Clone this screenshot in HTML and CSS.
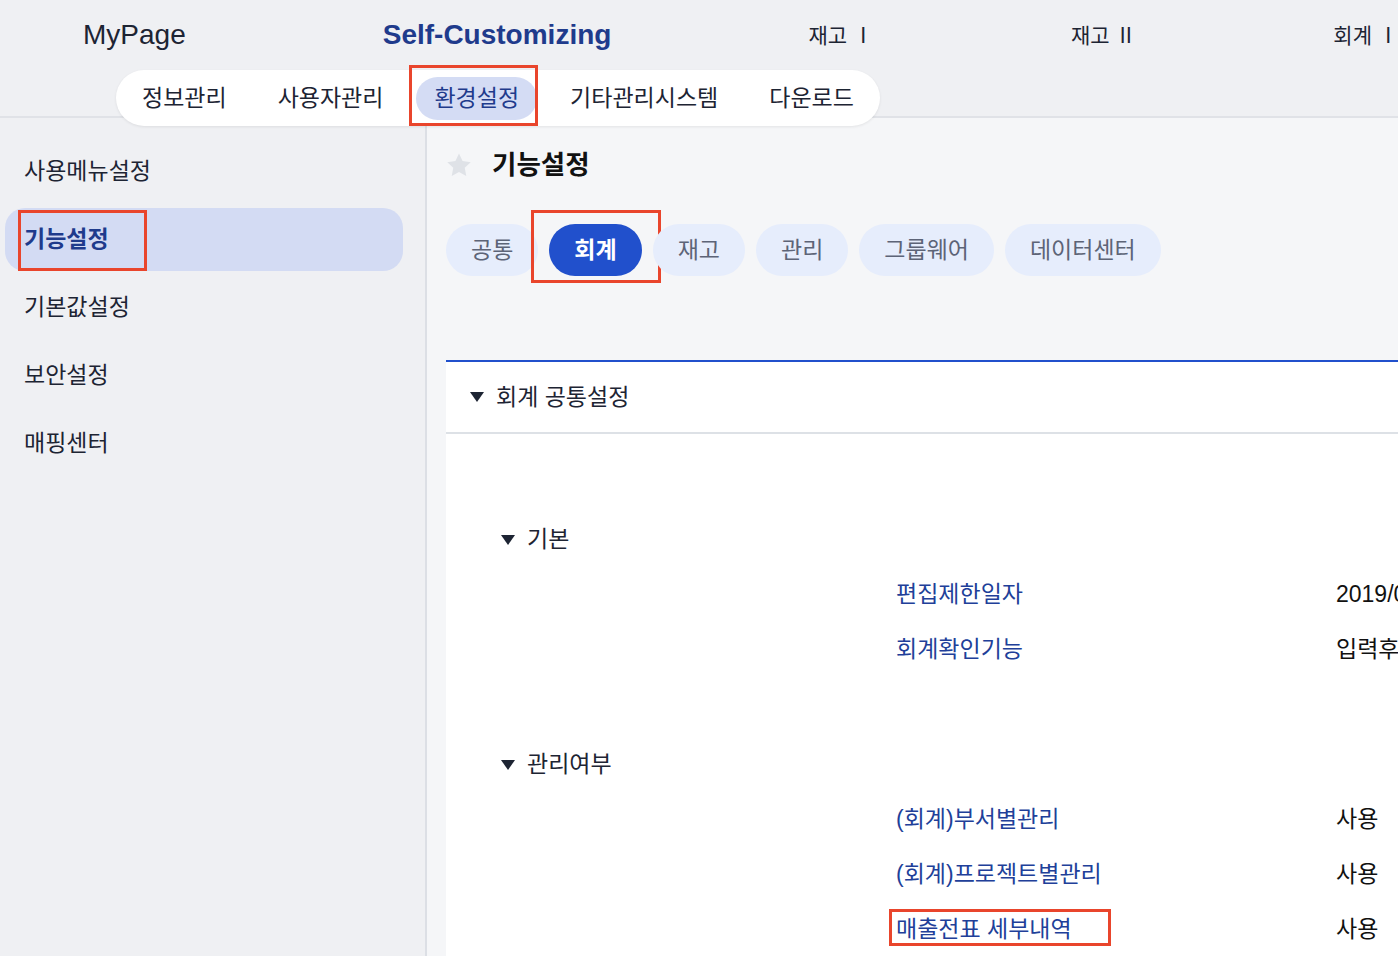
FILE: index.html
```html
<!DOCTYPE html>
<html lang="ko">
<head>
<meta charset="utf-8">
<title>기능설정</title>
<link rel="stylesheet" href="styles.css">
</head>
<body>
<header class="topbar">
  <nav class="gnb">
    <span class="gnb-item">MyPage</span>
    <span class="gnb-item gnb-active">Self-Customizing</span>
    <span class="gnb-item gnb-ko">재고 Ⅰ</span>
    <span class="gnb-item gnb-ko">재고 Ⅱ</span>
    <span class="gnb-item gnb-ko">회계 Ⅰ</span>
  </nav>
  <nav class="subnav">
    <span class="subnav-item">정보관리</span>
    <span class="subnav-item">사용자관리</span>
    <span class="subnav-item subnav-active">환경설정<span class="mark mark-subnav"></span></span>
    <span class="subnav-item">기타관리시스템</span>
    <span class="subnav-item">다운로드</span>
  </nav>
</header>
<div class="layout">
  <aside class="sidebar">
    <div class="side-item">사용메뉴설정</div>
    <div class="side-item side-active">기능설정<span class="mark mark-side"></span></div>
    <div class="side-item">기본값설정</div>
    <div class="side-item">보안설정</div>
    <div class="side-item">매핑센터</div>
  </aside>
  <main class="content">
    <div class="title-row">
      <svg class="star" width="26" height="25" viewBox="0 0 24 23"><path d="M12 0.5l3.3 6.9 7.5 1-5.5 5.2 1.4 7.5L12 17.5l-6.7 3.6 1.4-7.5L1.2 8.4l7.5-1z" fill="#dfe2e7"/></svg>
      <h1 class="title">기능설정</h1>
    </div>
    <div class="tabs">
      <span class="tab">공통</span>
      <span class="tab tab-active">회계<span class="mark mark-tab"></span></span>
      <span class="tab">재고</span>
      <span class="tab">관리</span>
      <span class="tab">그룹웨어</span>
      <span class="tab">데이터센터</span>
    </div>
    <section class="panel">
      <div class="panel-head">
        <svg class="tri" width="14" height="10" viewBox="0 0 14 10"><path d="M0 0h14L7 10z"/></svg>
        <span>회계 공통설정</span>
      </div>
      <div class="panel-body">
        <div class="group">
          <div class="group-head">
            <svg class="tri" width="14" height="10" viewBox="0 0 14 10"><path d="M0 0h14L7 10z"/></svg>
            <span>기본</span>
          </div>
          <div class="row"><span class="label">편집제한일자</span><span class="value">2019/01/01</span></div>
          <div class="row"><span class="label">회계확인기능</span><span class="value">입력후 확인</span></div>
        </div>
        <div class="group">
          <div class="group-head">
            <svg class="tri" width="14" height="10" viewBox="0 0 14 10"><path d="M0 0h14L7 10z"/></svg>
            <span>관리여부</span>
          </div>
          <div class="row"><span class="label">(회계)부서별관리</span><span class="value">사용</span></div>
          <div class="row"><span class="label">(회계)프로젝트별관리</span><span class="value">사용</span></div>
          <div class="row"><span class="label label-marked">매출전표 세부내역<span class="mark mark-row"></span></span><span class="value">사용</span></div>
        </div>
      </div>
    </section>
  </main>
</div>
</body>
</html>
```
FILE: styles.css
```css
* { box-sizing: border-box; }
html, body {
  margin: 0;
  height: 956px;
  overflow: hidden;
}
body {
  font-family: "Liberation Sans", "Noto Sans CJK KR", sans-serif;
  color: #1d2433;
  background: #f5f6f8;
}

/* ---------- top bar ---------- */
.topbar {
  height: 118px;
  background: #eff0f3;
  border-bottom: 2px solid #e0e2e7;
}
.gnb {
  height: 70px;
  display: flex;
  align-items: center;
  gap: 197px;
  padding-left: 83px;
  white-space: nowrap;
  overflow: hidden;
}
.gnb-item {
  font-size: 28px;
  line-height: 1;
  color: #1d2433;
  flex: none;
}
.gnb-active {
  font-weight: bold;
  color: #1f3b8c;
}
.gnb-ko {
  font-size: 21px;
}
.subnav {
  position: relative;
  z-index: 2;
  margin-left: 116px;
  width: max-content;
  height: 56px;
  padding: 0 8px;
  display: flex;
  align-items: center;
  gap: 15px;
  white-space: nowrap;
  background: #fff;
  border-radius: 28px;
  box-shadow: 0 1px 3px rgba(0, 0, 0, 0.08);
}
.subnav-item {
  position: relative;
  flex: none;
  height: 43px;
  padding: 0 18px;
  display: flex;
  align-items: center;
  font-size: 23px;
  line-height: 1;
  border-radius: 22px;
  color: #1d2433;
}
.subnav-active {
  background: #d4dcf4;
  color: #1f3b8c;
}

/* ---------- annotation marks ---------- */
.mark {
  position: absolute;
  border: 3px solid #e9452c;
  pointer-events: none;
}
.mark-subnav { left: -7px; top: -12px; width: 129px; height: 61px; }
.mark-side { left: 13px; top: 2px; width: 129px; height: 61px; }
.mark-tab { left: -18px; top: -14px; width: 130px; height: 73px; }
.mark-row { left: -7px; top: -9px; width: 222px; height: 37px; }

/* ---------- layout ---------- */
.layout {
  display: flex;
  height: 838px;
}
.sidebar {
  width: 427px;
  flex: none;
  background: #eff0f3;
  border-right: 2px solid #dcdfe5;
  padding-top: 22px;
}
.side-item {
  position: relative;
  width: 398px;
  height: 63px;
  margin: 0 0 5px 5px;
  padding-left: 19px;
  display: flex;
  align-items: center;
  font-size: 23px;
  line-height: 1;
  color: #1d2433;
  border-radius: 20px;
}
.side-active {
  background: #d3dbf3;
  color: #1f3b8c;
  font-weight: bold;
}

/* ---------- content ---------- */
.content {
  flex: 1;
  min-width: 0;
  padding: 32px 0 0 19px;
  background: #f5f6f8;
  overflow: hidden;
  white-space: nowrap;
}
.title-row {
  height: 30px;
  display: flex;
  align-items: center;
}
.star { flex: none; }
.title {
  margin: 0 0 0 20px;
  font-size: 26.5px;
  line-height: 1;
  font-weight: bold;
  color: #111;
}
.tabs {
  margin-top: 44px;
  display: flex;
  gap: 11px;
}
.tab {
  position: relative;
  height: 52px;
  padding: 0 25px;
  display: flex;
  align-items: center;
  font-size: 23px;
  line-height: 1;
  color: #5d6477;
  background: #e6edfc;
  border-radius: 26px;
}
.tab-active {
  background: #2150cc;
  color: #fff;
  font-weight: bold;
}

.panel {
  margin-top: 84px;
  background: #fff;
  border-top: 2px solid #2150cc;
  height: 600px;
}
.panel-head {
  height: 72px;
  padding-left: 24px;
  display: flex;
  align-items: center;
  gap: 12px;
  font-size: 23px;
  line-height: 1;
  border-bottom: 2px solid #dde1e6;
}
.tri { fill: #1d2433; flex: none; }
.panel-body {
  padding-top: 18px;
}
.group {
  padding-top: 60px;
}
.group-head {
  height: 55px;
  padding-left: 55px;
  display: flex;
  align-items: center;
  gap: 12px;
  font-size: 23px;
  line-height: 1;
}
.row {
  height: 55px;
  display: grid;
  grid-template-columns: 440px auto;
  align-items: center;
  padding-left: 450px;
  font-size: 23px;
  line-height: 1;
}
.label {
  position: relative;
  color: #213f99;
  justify-self: start;
}
.value {
  color: #111;
}
```
